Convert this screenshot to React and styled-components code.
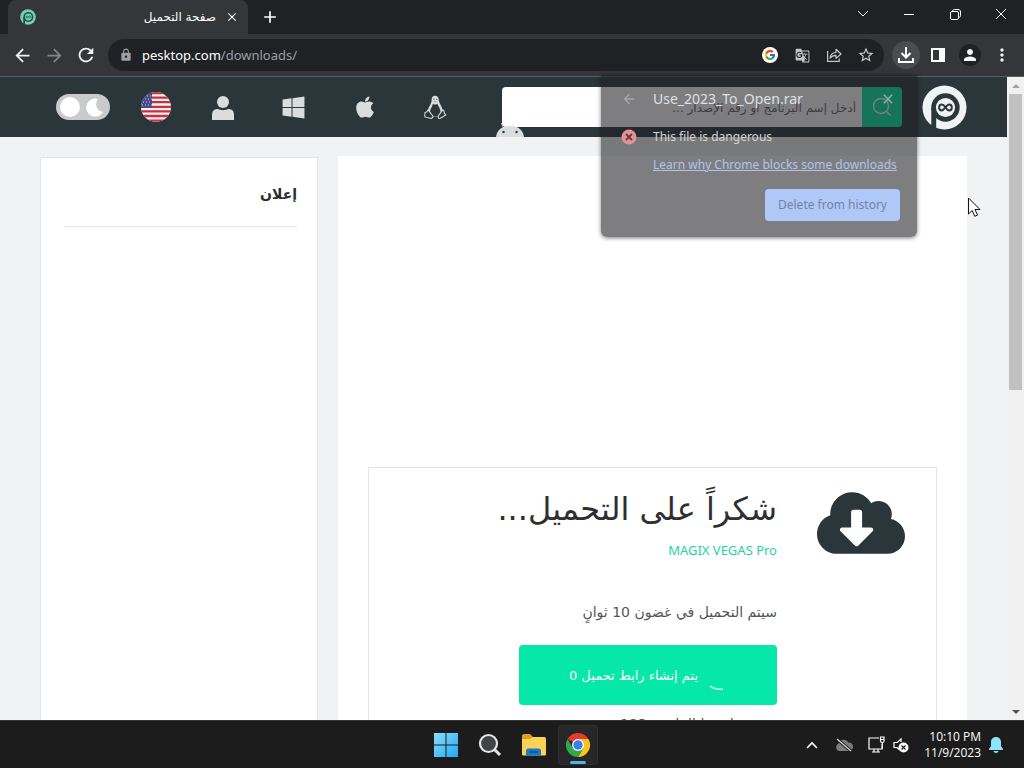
import React from 'react';
import styled, { createGlobalStyle, css } from 'styled-components';
import { FaApple, FaWindows, FaCloudDownloadAlt } from 'react-icons/fa';
import { FcGoogle } from 'react-icons/fc';
import { MdGTranslate, MdStarBorder, MdLock, MdPerson, MdMoreVert, MdClose, MdArrowBack, MdArrowForward, MdRefresh, MdAdd } from 'react-icons/md';

const GlobalStyle = createGlobalStyle`
  * {
    box-sizing: border-box;
  }
  body {
    margin: 0;
    font-family: 'Open Sans', 'DejaVu Sans', sans-serif;
    font-size: 12px;
    overflow: hidden;
  }
  button {
    border: 0;
    padding: 0;
    background: none;
    color: inherit;
    font: inherit;
  }
  svg {
    display: block;
    flex: none;
  }
`;

const Screen = styled.div`
  position: relative;
  display: flex;
  flex-direction: column;
  height: 100vh;
`;

/* browser */

const TabStrip = styled.div`
  display: flex;
  height: 34px;
  padding-left: 8px;
  background: #202124;
  color: #fff;
`;

const Tab = styled.div`
  display: flex;
  align-items: center;
  gap: 8px;
  width: 240px;
  padding: 0 8px 0 12px;
  border-radius: 8px 8px 0 0;
  background: #35363a;
`;

const TabTitle = styled.span`
  flex: 1;
  font: 12px/16px 'DejaVu Sans', sans-serif;
`;

const TabButton = styled.button`
  display: grid;
  place-items: center;
  width: 16px;
  height: 16px;
`;

const NewTab = styled(TabButton)`
  width: 28px;
  height: 34px;
  margin-left: 8px;
`;

const WindowButtons = styled.div`
  display: flex;
  height: 28px;
  margin-left: auto;
`;

const WindowButton = styled.button`
  display: grid;
  place-items: center;
  width: 46px;
`;

const Toolbar = styled.div`
  position: relative;
  z-index: 2;
  display: flex;
  align-items: center;
  gap: 6px;
  height: 43px;
  padding: 0 6px;
  border-bottom: 1px solid #5b5d60;
  background: #35363a;
  color: #f1f3f4;
`;

const ToolGroup = styled.div`
  display: flex;
`;

const ToolButton = styled.button`
  display: grid;
  place-items: center;
  width: 32px;
  height: 32px;
  color: ${props => props.$color || 'inherit'};
`;

const RoundIcon = styled.span`
  display: grid;
  place-items: center;
  width: ${props => props.$size}px;
  height: ${props => props.$size}px;
  border-radius: 50%;
  background: ${props => props.$bg};
`;

const Omnibox = styled.div`
  flex: 1;
  display: flex;
  align-items: center;
  height: 32px;
  padding: 0 2px 0 11px;
  border-radius: 16px;
  background: #202124;
  color: #c4c7c9;
`;

const Address = styled.a`
  flex: 1;
  margin-left: 9px;
  color: #9aa0a6;
  font: 13px/20px 'Noto Sans', sans-serif;
  text-decoration: none;
`;

const Host = styled.span`
  color: #fff;
`;

/* download bubble */

const Bubble = styled.section`
  position: absolute;
  top: 41px;
  right: 107px;
  width: 316px;
  padding: 13px 17px 16px 20px;
  border-radius: 0 0 6px 6px;
  background: rgba(32, 33, 36, 0.58);
  box-shadow: 0 1px 4px rgba(0, 0, 0, 0.5);
  color: #dfe1e2;
`;

const BubbleRow = styled.div`
  display: grid;
  grid-template-columns: 16px 1fr 20px;
  column-gap: 16px;
  align-items: center;
  margin-bottom: 16px;
`;

const BubbleTitle = styled.h2`
  margin: 0;
  font: 14px/22px 'Noto Sans', sans-serif;
`;

const BubbleText = styled.p`
  margin: 0;
  color: #d3d4d5;
  font: 12px/22px 'Noto Sans', sans-serif;
  white-space: nowrap;
`;

const BubbleLink = styled.a`
  display: block;
  margin: -10px 0 13px 32px;
  color: #b3c2ec;
  font: 12px/22px 'Noto Sans', sans-serif;
  white-space: nowrap;
`;

const DeleteButton = styled.button`
  display: block;
  width: 135px;
  height: 32px;
  margin-left: auto;
  border-radius: 4px;
  background: #b0c8f8;
  color: #7084a6;
  font: 12px/20px 'Noto Sans', sans-serif;
`;

/* page */

const Viewport = styled.div`
  flex: 1;
  display: flex;
  min-height: 0;
  background: #f1f2f4;
`;

const Page = styled.div`
  flex: 1;
  overflow: hidden;
  font-family: 'DejaVu Sans', sans-serif;
`;

const Header = styled.header`
  position: relative;
  display: flex;
  align-items: center;
  height: 60px;
  padding: 0 40px 0 56px;
  overflow: hidden;
  background: #2a363a;
  color: #dadddd;
`;

const ThemeToggle = styled.button`
  display: flex;
  align-items: center;
  justify-content: space-between;
  width: 54px;
  height: 26px;
  padding: 0 5px 0 4px;
  border-radius: 13px;
  background: #c8cacb;
`;

const Language = styled.button`
  margin: 0 16px 0 31px;
`;

const Nav = styled.nav`
  display: flex;
`;

const NavLink = styled.a`
  display: grid;
  place-items: center;
  width: 71px;
  height: 60px;
  color: inherit;
`;

const Android = styled.a`
  position: absolute;
  left: 496px;
  bottom: 0;
`;

const Search = styled.form`
  display: flex;
  width: 400px;
  height: 40px;
  margin: 0 20px 0 auto;
  border-radius: 4px;
  overflow: hidden;
`;

const SearchInput = styled.input`
  flex: 1;
  min-width: 0;
  padding: 2px 6px 0;
  border: 0;
  background: #fff;
  font: 12px/20px 'DejaVu Sans', sans-serif;
  &::placeholder {
    color: #666;
  }
`;

const SearchButton = styled.button`
  display: grid;
  place-items: center;
  width: 40px;
  background: #05e8a8;
  color: #fff;
`;

const Columns = styled.div`
  display: flex;
  align-items: flex-start;
  gap: 20px;
  padding: 19px 40px 0;
`;

const card = css`
  height: 800px;
  background: #fff;
`;

const Content = styled.main`
  ${card}
  flex: 1;
  padding: 0 30px;
`;

const AdSpace = styled.div`
  height: 311px;
`;

const DownloadBox = styled.section`
  display: flex;
  gap: 40px;
  padding: 18px 31px;
  border: 1px solid #e4e5e6;
  color: #2a363a;
`;

const CloudIcon = styled(FaCloudDownloadAlt)`
  width: 88px;
  height: 74px;
`;

const Title = styled.h1`
  margin: 0 0 8px;
  color: #2d2f31;
  font-size: 32px;
  font-weight: 400;
  line-height: 46px;
`;

const ProductLink = styled.a`
  display: block;
  margin-bottom: 40px;
  color: #27d3a2;
  font: 13px/20px 'Noto Sans', sans-serif;
  text-decoration: none;
`;

const Note = styled.p`
  margin: 0;
  color: #555;
  font-size: 14px;
  line-height: 24px;
`;

const GenerateButton = styled.button`
  display: flex;
  align-items: center;
  gap: 8px;
  width: 258px;
  height: 60px;
  margin: 21px 0 7px;
  padding-right: 51px;
  border-radius: 4px;
  background: #05e8a8;
  color: #fff;
  font-size: 13px;
  font-weight: 400;
`;

const Sidebar = styled.aside`
  ${card}
  width: 278px;
  margin-top: 1px;
  padding: 24px 20px 0 23px;
  border: 1px solid #e4e5e7;
`;

const SidebarTitle = styled.h3`
  margin: 0;
  padding-bottom: 20px;
  border-bottom: 1px solid #e6e7e8;
  color: #2b2d2f;
  font-size: 14px;
  line-height: 24px;
`;

const Scrollbar = styled.div`
  display: flex;
  flex-direction: column;
  align-items: center;
  width: 17px;
  background: #f1f1f1;
`;

const ScrollArrow = styled.span`
  display: grid;
  place-items: center;
  height: 17px;
  color: ${props => props.$color};
`;

const Thumb = styled.div`
  width: 13px;
  height: 296px;
  margin-bottom: auto;
  background: #c1c1c1;
`;

const Cursor = styled.svg`
  position: absolute;
  left: 967px;
  top: 197px;
  z-index: 3;
`;

/* taskbar */

const Taskbar = styled.footer`
  position: relative;
  display: grid;
  grid-template-columns: 1fr auto 1fr;
  align-items: center;
  height: 48px;
  border-top: 1px solid #343434;
  background: #1c1c1c;
  color: #fff;
`;

const Apps = styled.div`
  grid-column: 2;
  display: flex;
  gap: 4px;
`;

const AppButton = styled.button`
  position: relative;
  display: grid;
  place-items: center;
  width: 40px;
  height: 40px;
  border-radius: 4px;
  ${props => props.$active && css`
    background: #272727;
    box-shadow: inset 0 0 0 1px #303030;
    &::after {
      content: '';
      position: absolute;
      left: 12px;
      bottom: 1px;
      width: 16px;
      height: 3px;
      border-radius: 2px;
      background: #4cb4e8;
    }
  `}
`;

const Tray = styled.div`
  display: flex;
  align-items: center;
  justify-content: flex-end;
  gap: 8px;
  padding-right: 21px;
`;

const TrayButton = styled.button`
  display: grid;
  place-items: center;
  width: ${props => props.$width || 18}px;
  height: 32px;
`;

const Clock = styled.time`
  margin-left: 7px;
  font: 12px/16px 'Open Sans', sans-serif;
  text-align: right;
`;

const Logo = ({ size, color, hole }) => (
  <svg width={size} height={size} viewBox="0 0 46 46">
    <circle cx="23" cy="23" r="22.500" fill={color} />
    <circle cx="24" cy="23" r="14.500" fill={hole} />
    <path d="M9.500 23h5v24h-5z" fill={hole} />
    <circle cx="24" cy="23" r="9.800" fill={color} />
    <path d="M24 23c-1.500-2.300-2.600-3-3.800-3-3.600 0-3.600 6 0 6 2.800 0 4.300-6 7.600-6 3.600 0 3.600 6 0 6-1.200 0-2.300-.7-3.800-3" fill="none" stroke={hole} strokeWidth="2" />
  </svg>
);

const Flag = () => (
  <svg width="30" height="30" viewBox="0 0 30 30">
    <defs>
      <clipPath id="round"><circle cx="15" cy="15" r="15" /></clipPath>
    </defs>
    <g clipPath="url(#round)">
      <path d="M0 0h30v30H0z" fill="#f4f2f2" />
      <path d="M0 1h30M0 5.600h30M0 10.200h30M0 14.800h30M0 19.400h30M0 24h30M0 28.600h30" stroke="#c8303f" strokeWidth="2.300" />
      <path d="M0 0h11v15.900H0z" fill="#45498d" />
      <path d="M3 4h8M1 7h10M2 10h9M1 13h10" stroke="#c9cbe4" strokeWidth="1" strokeDasharray="1 2" />
    </g>
  </svg>
);

const Tux = () => (
  <svg width="23" height="25" viewBox="0 0 24 26" fill="none">
    <path d="M8 4.500C8 2 9.500.8 11.500.8s3.900 1.300 3.900 4.200c0 4 4.200 7 4.200 13.200l-3.800 4.300H8l-4-4.700C4 12.500 8.200 10 8 4.500z" fill="#dadddd" />
    <path d="M9.300 9c1.600 1.400 3.200 1.100 4.600 0 1.100 3 3.400 5.300 3.400 8.400 0 2-1 4-2.600 4.800H9c-2-1.100-2.700-2.800-2.700-4.700C6.300 14.300 8.800 12 9.300 9z" fill="#2a363a" />
    <path d="M10 4.500h.8M13 4.500h.8" stroke="#2a363a" strokeWidth="1.400" />
    <path d="M9.500 6.500h4l-2 1.600z" fill="#a9a283" />
    <path d="M4.300 15.500 8.800 21.300c1.200 2.300-.8 3.600-2.500 2.800L1 22.800c-.8-1.500.3-2.400 0-4.500l2-.8zM19.600 15.500l-4.600 6c-.8 2.300.7 3.600 2.500 2.500l5.300-3.200-1.600-1.600-.2-2.200z" fill="#2a363a" stroke="#dadddd" strokeWidth="1.100" />
  </svg>
);

const App = () => (
  <Screen>
    <GlobalStyle />
    <TabStrip>
      <Tab>
        <Logo size={16} color="#76cfb0" hole="#1e4f48" />
        <TabTitle dir="rtl">صفحة التحميل</TabTitle>
        <TabButton aria-label="Close tab"><MdClose size={14} /></TabButton>
      </Tab>
      <NewTab aria-label="New tab"><MdAdd size={20} /></NewTab>
      <WindowButtons>
        <WindowButton aria-label="Search tabs">
          <svg width="12" height="8" fill="none" stroke="#fff"><path d="m1 1 5 5 5-5" /></svg>
        </WindowButton>
        <WindowButton aria-label="Minimize">
          <svg width="10" height="2"><path d="M0 1.500h10" stroke="#fff" /></svg>
        </WindowButton>
        <WindowButton aria-label="Restore">
          <svg width="11" height="11" fill="none" stroke="#fff">
            <rect x=".5" y="2.500" width="8" height="8" rx="1.500" />
            <path d="M2.500 2.500c0-1.300.7-2 2-2h3.500c1.600 0 2.500.9 2.500 2.500v3.500c0 1.300-.7 2-2 2" />
          </svg>
        </WindowButton>
        <WindowButton aria-label="Close">
          <svg width="12" height="12" stroke="#fff"><path d="m1 1 10 10M11 1 1 11" /></svg>
        </WindowButton>
      </WindowButtons>
    </TabStrip>

    <Toolbar>
      <ToolGroup>
        <ToolButton aria-label="Back"><MdArrowBack size={21} /></ToolButton>
        <ToolButton aria-label="Forward" $color="#84868a"><MdArrowForward size={21} /></ToolButton>
        <ToolButton aria-label="Reload"><MdRefresh size={22} /></ToolButton>
      </ToolGroup>
      <Omnibox>
        <MdLock size={14} color="#9aa0a6" />
        <Address href="#downloads"><Host>pesktop.com</Host>/downloads/</Address>
        <ToolButton aria-label="Google">
          <svg width="16" height="16"><circle cx="8" cy="8" r="8" fill="#fff" /><FcGoogle x="2" y="2" size={12} /></svg>
        </ToolButton>
        <ToolButton aria-label="Translate"><MdGTranslate size={15} /></ToolButton>
        <ToolButton aria-label="Share">
          <svg width="16" height="16" viewBox="0 0 16 16" fill="none" stroke="currentColor" strokeWidth="1.200">
            <path d="M1.600 4v10.400h11.600v-3" />
            <path d="M4 11.200c.3-3.600 2.300-5.500 6-5.700V2.300L15 7l-5 4.400V8.300c-2.800 0-4.500.8-6 2.900z" strokeLinejoin="round" />
          </svg>
        </ToolButton>
        <ToolButton aria-label="Bookmark"><MdStarBorder size={18} /></ToolButton>
      </Omnibox>
      <ToolGroup>
        <ToolButton aria-label="Downloads">
          <RoundIcon $size={28} $bg="#4b4c50">
            <svg width="18" height="18" fill="none" stroke="#fff" strokeWidth="2">
              <path d="M9 1v10M4.500 7 9 11.500 13.500 7M2 12v4h14v-4" />
            </svg>
          </RoundIcon>
        </ToolButton>
        <ToolButton aria-label="Side panel">
          <svg width="14" height="14"><path d="M1 1h12v12H1z" fill="none" stroke="#fff" strokeWidth="2" /><path d="M8 1h5v12H8z" fill="#fff" /></svg>
        </ToolButton>
        <ToolButton aria-label="Profile"><RoundIcon $size={22} $bg="#202124"><MdPerson size={18} /></RoundIcon></ToolButton>
        <ToolButton aria-label="Menu"><MdMoreVert size={20} /></ToolButton>
      </ToolGroup>
      <Bubble>
        <BubbleRow>
          <MdArrowBack size={16} color="#a5a8a9" />
          <BubbleTitle>Use_2023_To_Open.rar</BubbleTitle>
          <TabButton aria-label="Dismiss"><MdClose size={16} color="#8fb9ad" /></TabButton>
        </BubbleRow>
        <BubbleRow>
          <svg width="16" height="16"><circle cx="8" cy="8" r="7.500" fill="#e09498" /><path d="m5 5 6 6M11 5l-6 6" stroke="#70383c" strokeWidth="1.800" /></svg>
          <BubbleText>This file is dangerous</BubbleText>
        </BubbleRow>
        <BubbleLink href="#learn">Learn why Chrome blocks some downloads</BubbleLink>
        <DeleteButton>Delete from history</DeleteButton>
      </Bubble>
    </Toolbar>

    <Viewport>
      <Page>
        <Header>
          <ThemeToggle aria-label="Theme">
            <svg width="20" height="20"><circle cx="10" cy="10" r="10" fill="#fff" /></svg>
            <svg width="20" height="20"><path d="M13 2A9 9 0 1 0 18 15 8 8 0 0 1 13 2z" fill="#fff" /></svg>
          </ThemeToggle>
          <Language aria-label="English"><Flag /></Language>
          <Nav>
            <NavLink href="#account" aria-label="Account">
              <svg width="22" height="25" fill="currentColor"><circle cx="11" cy="7" r="6" /><path d="M0 25v-5c0-4 2-6 6-6 2 1.500 8 1.500 10 0 4 0 6 2 6 6v5z" /></svg>
            </NavLink>
            <NavLink href="#windows" aria-label="Windows"><FaWindows size={25} /></NavLink>
            <NavLink href="#mac" aria-label="Mac"><FaApple size={24} /></NavLink>
            <NavLink href="#linux" aria-label="Linux"><Tux /></NavLink>
          </Nav>
          <Search onSubmit={e => e.preventDefault()}>
            <SearchInput dir="rtl" aria-label="بحث" placeholder="أدخل إسم البرنامج أو رقم الإصدار ..." />
            <SearchButton aria-label="Search">
              <svg width="20" height="20" fill="none" stroke="#fff" strokeWidth="1.300"><circle cx="9" cy="9" r="7.500" /><path d="m14.500 14.500 4 4" /></svg>
            </SearchButton>
          </Search>
          <Logo size={45} color="#eff3f4" hole="#2a363a" />
          <Android href="#android" aria-label="Android">
            <svg width="28" height="16">
              <path d="m7 6-1.500-4" stroke="#dadddd" />
              <path d="M0 16C1 8 7 5 14 5s13 3 14 11z" fill="#dadddd" />
              <circle cx="7.500" cy="11" r="1.200" fill="#2a363a" /><circle cx="20.500" cy="11" r="1.200" fill="#2a363a" />
            </svg>
          </Android>
        </Header>
        <Columns dir="rtl">
          <Content>
            <AdSpace />
            <DownloadBox>
              <CloudIcon />
              <div>
                <Title>شكراً على التحميل...</Title>
                <ProductLink href="#product"><bdi>MAGIX VEGAS Pro</bdi></ProductLink>
                <Note>سيتم التحميل في غضون 10 ثوانٍ</Note>
                <GenerateButton>
                  <svg width="20" height="36" fill="none" stroke="#a4f6de" strokeWidth="2"><path d="M4 29c3 2.500 8 3.500 13 3" /></svg>
                  <span>يتم إنشاء رابط تحميل 0</span>
                </GenerateButton>
                <Note>تم تحميل هذا الملف : 123</Note>
              </div>
            </DownloadBox>
          </Content>
          <Sidebar>
            <SidebarTitle>إعلان</SidebarTitle>
          </Sidebar>
        </Columns>
      </Page>
      <Scrollbar>
        <ScrollArrow $color="#a3a3a3"><svg width="8" height="4" fill="currentColor"><path d="m0 4 4-4 4 4z" /></svg></ScrollArrow>
        <Thumb />
        <ScrollArrow $color="#505050"><svg width="8" height="4" fill="currentColor"><path d="m0 0 4 4 4-4z" /></svg></ScrollArrow>
      </Scrollbar>
    </Viewport>

    <Taskbar>
      <Apps>
        <AppButton aria-label="Start">
          <svg width="24" height="24">
            <defs><linearGradient id="win" x1="0" y1="0" x2="1" y2="1"><stop offset="0" stopColor="#8ddcff" /><stop offset="1" stopColor="#1eaaf2" /></linearGradient></defs>
            <path d="M0 0h11.500v11.500H0zM12.500 0H24v11.500H12.500zM0 12.500h11.500V24H0zM12.500 12.500H24V24H12.500z" fill="url(#win)" />
          </svg>
        </AppButton>
        <AppButton aria-label="Search">
          <svg width="24" height="24"><path d="m16 16 6 6" stroke="#e4e4e4" strokeWidth="3" /><circle cx="10.500" cy="10.500" r="8.500" fill="#414446" stroke="#e4e4e4" strokeWidth="2.200" /></svg>
        </AppButton>
        <AppButton aria-label="File Explorer">
          <svg width="26" height="24">
            <path d="M1 3c0-1 .6-2 2-2h6l3 3h9v6H1z" fill="#d9a021" />
            <path d="M1 6h8l3-2h11c1.400 0 2 .7 2 2v15c0 1-.5 1.500-1.500 1.500h-21C1.500 22.500 1 22 1 21z" fill="#fbd354" />
            <path d="M5 22.500V18c0-1.500.8-2.500 2.500-2.500h10c1.700 0 2.500 1 2.500 2.500v4.500z" fill="#1979c9" />
            <path d="M8 19h9" stroke="#0e5ca6" strokeWidth="2" />
          </svg>
        </AppButton>
        <AppButton aria-label="Chrome" $active>
          <svg width="24" height="24" viewBox="0 0 24 24">
            <path d="M12 12 1.600 6A12 12 0 0 1 22.400 6z" fill="#e33b2e" />
            <path d="M12 6h10.400A12 12 0 0 1 12 24l5.200-9z" fill="#fcc31e" />
            <path d="M1.600 6A12 12 0 0 0 12 24l5.200-9L12 12 6.800 15z" fill="#2da94f" />
            <circle cx="12" cy="12" r="6" fill="#fff" />
            <circle cx="12" cy="12" r="4.700" fill="#3a7ee8" />
          </svg>
        </AppButton>
      </Apps>
      <Tray>
        <TrayButton aria-label="Hidden icons"><svg width="12" height="8" fill="none" stroke="#fff" strokeWidth="1.600"><path d="m1 7 5-5 5 5" /></svg></TrayButton>
        <TrayButton aria-label="OneDrive" $width={30}>
          <svg width="18" height="16"><path d="M4 14a4 4 0 0 1-.5-7.500A5.500 5.500 0 0 1 13.500 5.500 4.200 4.200 0 0 1 14 14z" fill="#7c7c7c" /><path d="m2 2 14 12" stroke="#1c1c1c" strokeWidth="3" /><path d="m2 2 14 12" stroke="#d8d8d8" strokeWidth="1.300" /></svg>
        </TrayButton>
        <TrayButton aria-label="Network">
          <svg width="17" height="17" fill="none" stroke="#fff" strokeWidth="1.200"><path d="M11 2H1v11h13V8M4 16h8M6 13v3M10 13v3M12.500 1h3.500v4c0 1-.6 1.500-1.700 1.500S12.500 6 12.500 5zM14.300 6.500V13M12.500 3.500H16" /></svg>
        </TrayButton>
        <TrayButton aria-label="Volume" $width={16}>
          <svg width="16" height="16" fill="none" stroke="#fff" strokeWidth="1.200"><path d="M8 5V2L4.500 5.500H1v5h3L6 12.500" /><circle cx="10.500" cy="10.500" r="5" fill="#fff" stroke="none" /><path d="m8.500 8.500 4 4M12.500 8.500l-4 4" stroke="#1c1c1c" /></svg>
        </TrayButton>
        <Clock>10:10 PM<br />11/9/2023</Clock>
        <TrayButton aria-label="Notifications" $width={14}>
          <svg width="14" height="16" fill="#8de3f8"><path d="M7 0c3 0 5 2.200 5 5v4l2 3v1H0v-1l2-3V5c0-2.800 2-5 5-5zM4.500 14h5c-.3 1.300-1.200 2-2.500 2s-2.200-.7-2.500-2z" /></svg>
        </TrayButton>
      </Tray>
    </Taskbar>
    <Cursor width="14" height="21"><path d="M1.500 1v16l3.700-3.500 2.500 5.800 2.800-1.200-2.500-5.600h5z" fill="#fff" stroke="#111" /></Cursor>
  </Screen>
);

export default App;
